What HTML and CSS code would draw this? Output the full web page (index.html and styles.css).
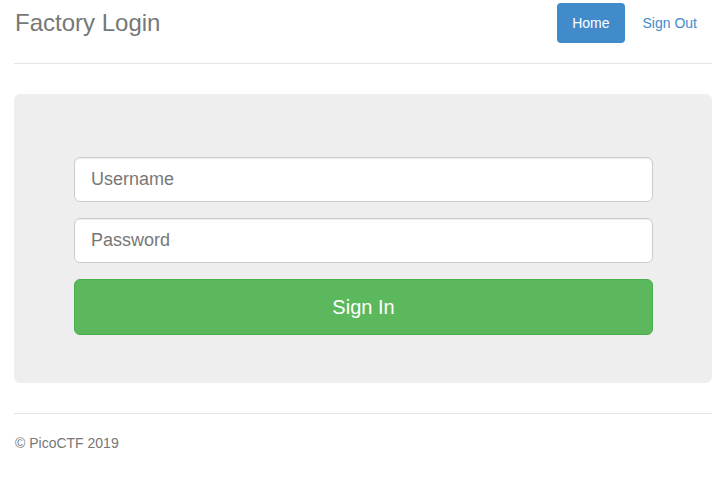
FILE: index.html
```html
<!DOCTYPE html>
<html lang="en">
<head>
  <meta charset="UTF-8">
  <title>Factory Login</title>
  <link rel="stylesheet" href="styles.css">
</head>
<body>
  <div class="container">
    <div class="header">
      <h3 class="text-muted">Factory Login</h3>
      <ul class="nav">
        <li class="active"><a href="#">Home</a></li>
        <li><a href="#">Sign Out</a></li>
      </ul>
    </div>

    <div class="jumbotron">
      <form class="login-form">
        <input type="text" class="form-control" placeholder="Username">
        <input type="password" class="form-control" placeholder="Password">
        <button type="submit" class="btn-signin">Sign In</button>
      </form>
    </div>

    <div class="footer">
      <p>&copy; PicoCTF 2019</p>
    </div>
  </div>
</body>
</html>
```

FILE: styles.css
```css
* {
  box-sizing: border-box;
}
body {
  margin: 0;
  font-family: "Liberation Sans", Arial, sans-serif;
  font-size: 14px;
  color: #333;
  background: #fff;
}
.container {
  padding: 3px 13px 0 14px;
}
.header {
  display: flex;
  justify-content: space-between;
  align-items: center;
  padding-bottom: 20px;
  border-bottom: 1px solid #e5e5e5;
}
.header h3 {
  margin: 0;
  padding-left: 1px;
  font-size: 24px;
  font-weight: normal;
  line-height: 40px;
}
.text-muted {
  color: #777;
}
.nav {
  display: flex;
  gap: 3px;
  list-style: none;
  margin: 0;
  padding: 0;
}
.nav a {
  display: block;
  padding: 10px 15px;
  border-radius: 4px;
  line-height: 20px;
  color: #428bca;
  text-decoration: none;
}
.nav .active a {
  background: #428bca;
  color: #fff;
}
.jumbotron {
  margin-top: 30px;
  padding: 63px 59px 48px 60px;
  background: #eee;
  border-radius: 6px;
}
.login-form {
  display: flex;
  flex-direction: column;
  gap: 16px;
}
.form-control {
  display: block;
  width: 100%;
  height: 45px;
  padding: 10px 16px;
  font-family: inherit;
  font-size: 18px;
  color: #555;
  background: #fff;
  border: 1px solid #ccc;
  border-radius: 6px;
  box-shadow: inset 0 1px 1px rgba(0,0,0,0.075);
}
.form-control::placeholder {
  color: #777;
}
.btn-signin {
  display: block;
  width: 100%;
  height: 56px;
  font-family: inherit;
  font-size: 20px;
  color: #fff;
  background: #5cb85c;
  border: 1px solid #4cae4c;
  border-radius: 6px;
  cursor: pointer;
}
.footer {
  margin-top: 30px;
  padding-top: 19px;
  border-top: 1px solid #e5e5e5;
  color: #777;
}
.footer p {
  margin: 0;
  padding-left: 1px;
  line-height: 20px;
}
```
